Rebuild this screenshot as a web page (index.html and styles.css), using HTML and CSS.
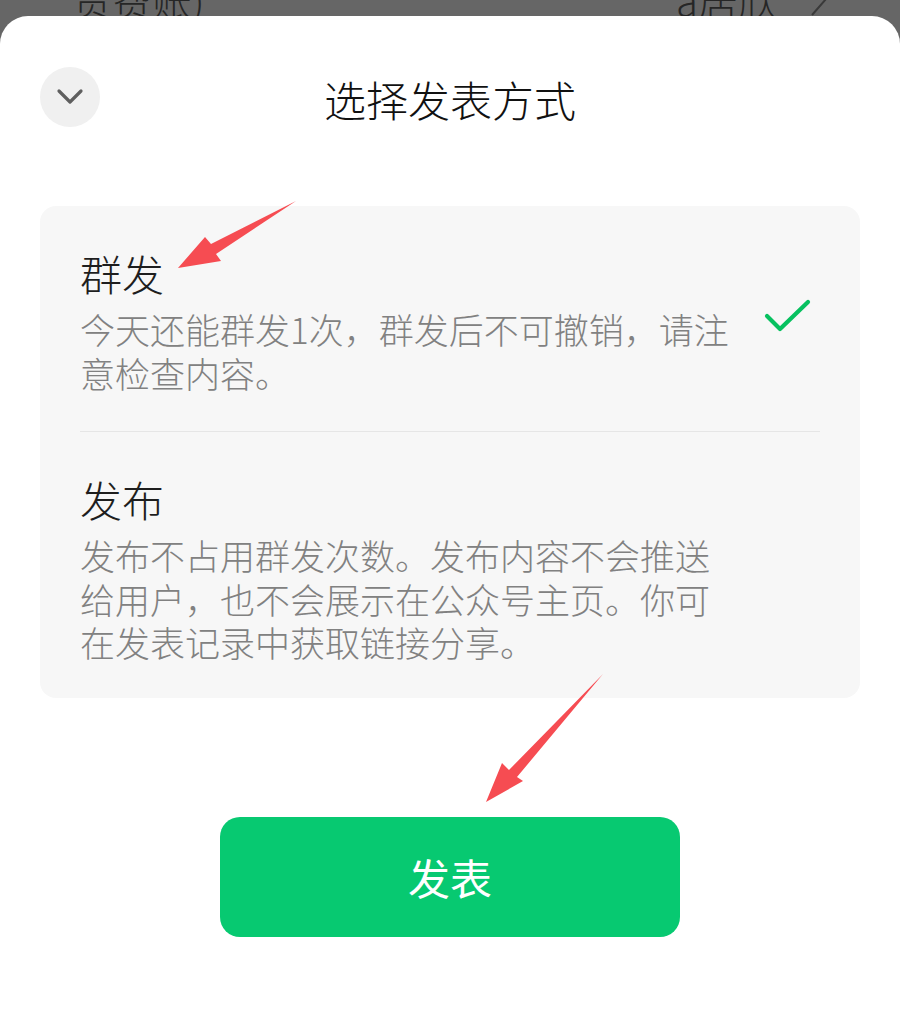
FILE: index.html
```html
<!DOCTYPE html>
<html lang="zh-CN">
<head>
    <meta charset="UTF-8">
    <meta name="viewport" content="width=device-width, initial-scale=1.0">
    <title>选择发表方式</title>
    <link rel="stylesheet" href="styles.css">
</head>
<body>
    <!-- 底层页面（被遮罩） -->
    <div class="behind">
        <span>资费账)</span>
        <span class="behind-right">a居欣
            <svg class="behind-arrow" width="24" height="40" viewBox="0 0 24 40"><path d="M4 4 L18 20 L4 36" fill="none" stroke="#3a3a3a" stroke-width="2"/></svg>
        </span>
    </div>

    <div class="sheet">
        <div class="sheet-header">
            <button class="collapse-btn">
                <svg width="28" height="20" viewBox="0 0 28 20"><path d="M3 4 L14 15 L25 4" fill="none" stroke="#5f5f5f" stroke-width="3.2" stroke-linecap="round" stroke-linejoin="round"/></svg>
            </button>
            <h1>选择发表方式</h1>
            <span></span>
        </div>

        <!-- 发表方式 -->
        <div class="options">
            <div class="option">
                <div class="option-text">
                    <div class="option-title">群发</div>
                    <div class="option-desc">今天还能群发1次，群发后不可撤销，请注意检查内容。</div>
                </div>
                <svg class="check" width="52" height="40" viewBox="0 0 52 40"><path d="M5 19 L18 32 L46 5" fill="none" stroke="#07c160" stroke-width="4.2" stroke-linecap="round" stroke-linejoin="round"/></svg>
            </div>
            <div class="option">
                <div class="option-text">
                    <div class="option-title">发布</div>
                    <div class="option-desc">发布不占用群发次数。发布内容不会推送给用户，也不会展示在公众号主页。你可在发表记录中获取链接分享。</div>
                </div>
            </div>
        </div>

        <div class="actions">
            <button class="publish-btn">发表</button>
        </div>
    </div>

    <!-- 标注箭头 -->
    <svg class="annotations" width="900" height="1028" viewBox="0 0 900 1028">
        <polygon points="178,268 205,237 211,244 296,201 216,254 221,261" fill="#f64c52"/>
        <polygon points="486,802 502,763 509,770 603,674 517,777 523,781" fill="#f64c52"/>
    </svg>
</body>
</html>
```

FILE: styles.css
```css
* {
    margin: 0;
    padding: 0;
    box-sizing: border-box;
    font-family: "Noto Sans CJK SC", "Noto Sans", sans-serif;
}

body {
    background-color: #666666;
    width: 900px;
    min-height: 1028px;
    position: relative;
    overflow: hidden;
}

.behind {
    height: 16px;
    overflow: hidden;
    display: flex;
    justify-content: space-between;
    align-items: flex-end;
    padding: 0 68px 0 72px;
    font-size: 40px;
    line-height: 40px;
    color: #262626;
    font-weight: 300;
}

.behind span {
    margin-bottom: -3px;
}

.behind-right {
    display: flex;
    align-items: center;
    gap: 30px;
}

.sheet {
    background-color: white;
    border-radius: 28px 28px 0 0;
    min-height: 1012px;
    padding: 0 40px;
}

.sheet-header {
    height: 168px;
    display: grid;
    grid-template-columns: 60px 1fr 60px;
    align-items: center;
}

.collapse-btn {
    width: 60px;
    height: 60px;
    border: none;
    border-radius: 50%;
    background-color: #f0f0f0;
    display: flex;
    align-items: center;
    justify-content: center;
    margin-bottom: 6px;
}

.sheet-header h1 {
    text-align: center;
    font-size: 42px;
    font-weight: 300;
    color: #111111;
    line-height: 58px;
    margin-top: -2px;
}

.options {
    margin-top: 22px;
    background-color: #f7f7f7;
    border-radius: 16px;
    padding: 0 40px;
}

.option {
    display: flex;
    align-items: center;
    justify-content: space-between;
    padding: 38px 0 37px;
}

.option + .option {
    border-top: 1px solid #e6e6e6;
    padding-bottom: 34px;
}

.option-text {
    width: 655px;
}

.option-title {
    font-size: 42px;
    line-height: 58px;
    color: #1e1e1e;
    font-weight: 300;
}

.option-desc {
    margin-top: 5px;
    font-size: 35px;
    line-height: 43.5px;
    color: #818181;
    font-weight: 300;
}

.check {
    margin-right: 6px;
    margin-top: -4px;
}

.actions {
    display: flex;
    justify-content: center;
    padding-top: 119px;
}

.publish-btn {
    width: 460px;
    height: 120px;
    border: none;
    border-radius: 20px;
    background-color: #07c971;
    color: white;
    font-size: 42px;
    line-height: 120px;
}

.annotations {
    position: absolute;
    top: 0;
    left: 0;
    pointer-events: none;
}
```
